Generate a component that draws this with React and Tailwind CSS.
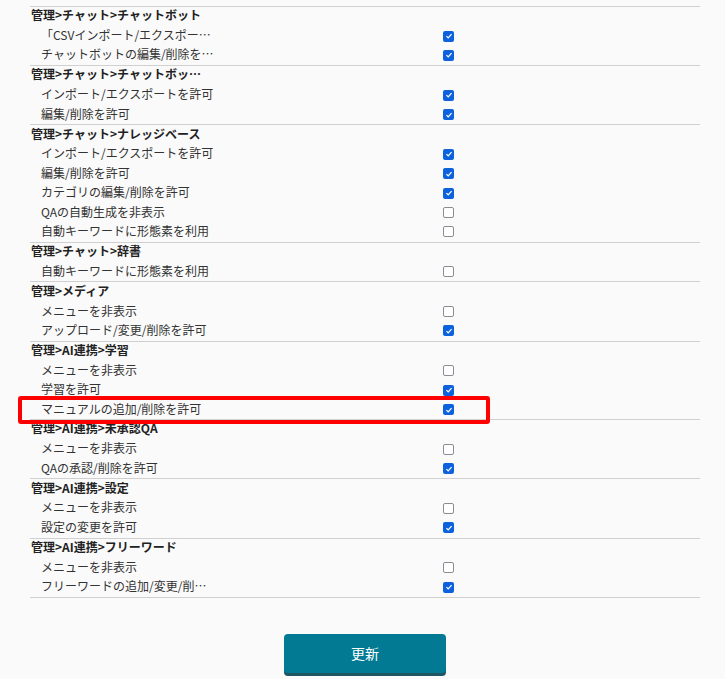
import React from 'react'

const groups = [
  {
    title: '管理>チャット>チャットボット',
    items: [
      ['「CSVインポート/エクスポー…', true],
      ['チャットボットの編集/削除を…', true],
    ],
  },
  {
    title: '管理>チャット>チャットボッ…',
    items: [
      ['インポート/エクスポートを許可', true],
      ['編集/削除を許可', true],
    ],
  },
  {
    title: '管理>チャット>ナレッジベース',
    items: [
      ['インポート/エクスポートを許可', true],
      ['編集/削除を許可', true],
      ['カテゴリの編集/削除を許可', true],
      ['QAの自動生成を非表示', false],
      ['自動キーワードに形態素を利用', false],
    ],
  },
  {
    title: '管理>チャット>辞書',
    items: [['自動キーワードに形態素を利用', false]],
  },
  {
    title: '管理>メディア',
    items: [
      ['メニューを非表示', false],
      ['アップロード/変更/削除を許可', true],
    ],
  },
  {
    title: '管理>AI連携>学習',
    items: [
      ['メニューを非表示', false],
      ['学習を許可', true],
      ['マニュアルの追加/削除を許可', true],
    ],
  },
  {
    title: '管理>AI連携>未承認QA',
    items: [
      ['メニューを非表示', false],
      ['QAの承認/削除を許可', true],
    ],
  },
  {
    title: '管理>AI連携>設定',
    items: [
      ['メニューを非表示', false],
      ['設定の変更を許可', true],
    ],
  },
  {
    title: '管理>AI連携>フリーワード',
    items: [
      ['メニューを非表示', false],
      ['フリーワードの追加/変更/削…', true],
    ],
  },
]

function Check({ checked }) {
  if (checked) {
    return (
      <span className="flex h-[11px] w-[11px] items-center justify-center rounded-[2px] bg-[#0b62dc]">
        <svg viewBox="0 0 10 10" className="h-[8px] w-[8px]">
          <path d="M1.8 5.2 L4 7.3 L8.2 2.6" fill="none" stroke="#fff" strokeWidth="1.6" />
        </svg>
      </span>
    )
  }
  return <span className="block h-[11px] w-[11px] rounded-[2px] border border-[#8c8c96] bg-white" />
}

export default function App() {
  return (
    <div
      className="relative min-h-screen bg-[#fafafa] pt-[6px] text-[12px] text-[#333]"
      style={{ fontFamily: '"Noto Sans CJK JP", "Noto Sans", sans-serif' }}
    >
      <div className="ml-[30px] w-[670px] border-b border-[#d0d0d0]">
        {groups.map((g) => (
          <div key={g.title} className="border-t border-[#d0d0d0]">
            <div className="flex h-[19.4px] items-center pb-[3px] pl-[1px] font-bold leading-none text-[#222]">
              {g.title}
            </div>
            {g.items.map(([label, checked]) => (
              <div key={label} className="flex h-[19.4px] items-center leading-none">
                <span className="-mt-[2px] w-[413px] pl-[11px]">{label}</span>
                <Check checked={checked} />
              </div>
            ))}
          </div>
        ))}
      </div>

      <div className="mt-[36px] flex justify-center">
        <button
          type="button"
          className="ml-[5px] h-[39px] w-[162px] rounded-[4px] bg-[#027a93] text-[14px] text-white shadow-[0_3px_0_#1f5662]"
        >
          更新
        </button>
      </div>

      <div className="pointer-events-none absolute left-[18px] top-[396px] h-[28px] w-[472px] rounded-[3px] border-4 border-[#ff0000]" />
    </div>
  )
}
